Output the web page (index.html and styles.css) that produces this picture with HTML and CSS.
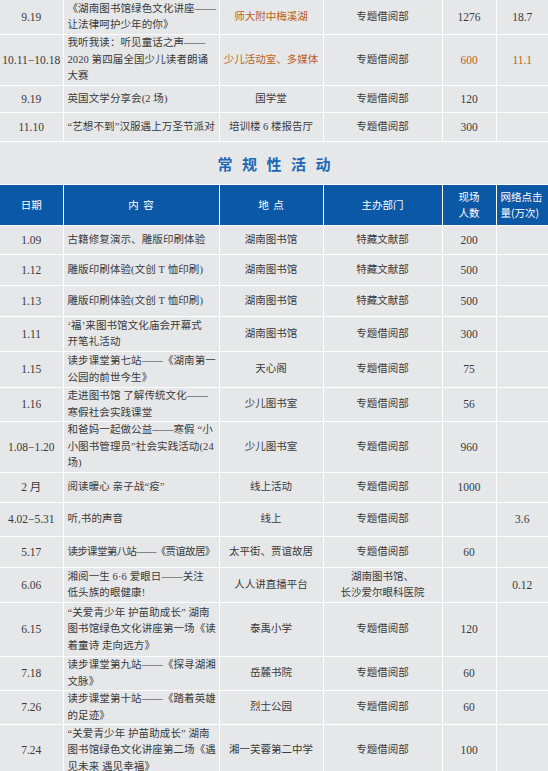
FILE: index.html
```html
<!DOCTYPE html>
<html lang="zh-CN">
<head>
<meta charset="utf-8">
<title>常规性活动</title>
<link rel="stylesheet" href="styles.css">
</head>
<body>
<table class="tbl">
  <colgroup>
    <col class="c-date"><col class="c-content"><col class="c-place"><col class="c-dept"><col class="c-people"><col class="c-net">
  </colgroup>
  <tbody>
    <tr class="h35">
      <td class="num">9.19</td>
      <td class="txt">《湖南图书馆绿色文化讲座——<br>让法律呵护少年的你》</td>
      <td class="mid orange">师大附中梅溪湖</td>
      <td class="mid">专题借阅部</td>
      <td class="num">1276</td>
      <td class="num">18.7</td>
    </tr>
    <tr class="h51">
      <td class="num">10.11−10.18</td>
      <td class="txt">我听我读：听见童话之声——<br>2020 第四届全国少儿读者朗诵<br>大赛</td>
      <td class="mid orange">少儿活动室、多媒体</td>
      <td class="mid">专题借阅部</td>
      <td class="num orange">600</td>
      <td class="num orange">11.1</td>
    </tr>
    <tr class="h27">
      <td class="num">9.19</td>
      <td class="txt">英国文学分享会(2 场)</td>
      <td class="mid">国学堂</td>
      <td class="mid">专题借阅部</td>
      <td class="num">120</td>
      <td class="num"></td>
    </tr>
    <tr class="h29">
      <td class="num">11.10</td>
      <td class="txt">“艺想不到”汉服遇上万圣节派对</td>
      <td class="mid">培训楼 6 楼报告厅</td>
      <td class="mid">专题借阅部</td>
      <td class="num">300</td>
      <td class="num"></td>
    </tr>
    <tr class="title-row">
      <td colspan="6" class="title">常规性活动</td>
    </tr>
    <tr class="head">
      <th>日期</th>
      <th>内&nbsp;&nbsp;容</th>
      <th>地&nbsp;&nbsp;点</th>
      <th>主办部门</th>
      <th>现场<br>人数</th>
      <th class="left">网络点击<br>量(万次)</th>
    </tr>
    <tr class="h29">
      <td class="num">1.09</td>
      <td class="txt">古籍修复演示、雕版印刷体验</td>
      <td class="mid">湖南图书馆</td>
      <td class="mid">特藏文献部</td>
      <td class="num">200</td>
      <td class="num"></td>
    </tr>
    <tr class="h31">
      <td class="num">1.12</td>
      <td class="txt">雕版印刷体验(文创 T 恤印刷)</td>
      <td class="mid">湖南图书馆</td>
      <td class="mid">特藏文献部</td>
      <td class="num">500</td>
      <td class="num"></td>
    </tr>
    <tr class="h31">
      <td class="num">1.13</td>
      <td class="txt">雕版印刷体验(文创 T 恤印刷)</td>
      <td class="mid">湖南图书馆</td>
      <td class="mid">特藏文献部</td>
      <td class="num">500</td>
      <td class="num"></td>
    </tr>
    <tr class="h35">
      <td class="num">1.11</td>
      <td class="txt">‘福’来图书馆文化庙会开幕式<br>开笔礼活动</td>
      <td class="mid">湖南图书馆</td>
      <td class="mid">专题借阅部</td>
      <td class="num">300</td>
      <td class="num"></td>
    </tr>
    <tr class="h36">
      <td class="num">1.15</td>
      <td class="txt">读步课堂第七站——《湖南第一<br>公园的前世今生》</td>
      <td class="mid">天心阁</td>
      <td class="mid">专题借阅部</td>
      <td class="num">75</td>
      <td class="num"></td>
    </tr>
    <tr class="h34">
      <td class="num">1.16</td>
      <td class="txt">走进图书馆 了解传统文化——<br>寒假社会实践课堂</td>
      <td class="mid">少儿图书室</td>
      <td class="mid">专题借阅部</td>
      <td class="num">56</td>
      <td class="num"></td>
    </tr>
    <tr class="h51">
      <td class="num">1.08−1.20</td>
      <td class="txt">和爸妈一起做公益——寒假 “小<br>小图书管理员”社会实践活动(24<br>场)</td>
      <td class="mid">少儿图书室</td>
      <td class="mid">专题借阅部</td>
      <td class="num">960</td>
      <td class="num"></td>
    </tr>
    <tr class="h30">
      <td class="num">2 月</td>
      <td class="txt">阅读暖心 亲子战“疫”</td>
      <td class="mid">线上活动</td>
      <td class="mid">专题借阅部</td>
      <td class="num">1000</td>
      <td class="num"></td>
    </tr>
    <tr class="h34">
      <td class="num">4.02−5.31</td>
      <td class="txt">听,书的声音</td>
      <td class="mid">线上</td>
      <td class="mid">专题借阅部</td>
      <td class="num"></td>
      <td class="num">3.6</td>
    </tr>
    <tr class="h31">
      <td class="num">5.17</td>
      <td class="txt tight">读步课堂第八站——《贾谊故居》</td>
      <td class="mid">太平街、贾谊故居</td>
      <td class="mid">专题借阅部</td>
      <td class="num">60</td>
      <td class="num"></td>
    </tr>
    <tr class="h35">
      <td class="num">6.06</td>
      <td class="txt">湘阅一生 6·6 爱眼日——关注<br>低头族的眼健康!</td>
      <td class="mid">人人讲直播平台</td>
      <td class="mid">湖南图书馆、<br>长沙爱尔眼科医院</td>
      <td class="num"></td>
      <td class="num">0.12</td>
    </tr>
    <tr class="h54">
      <td class="num">6.15</td>
      <td class="txt">“关爱青少年 护苗助成长” 湖南<br>图书馆绿色文化讲座第一场《读<br>着童诗 走向远方》</td>
      <td class="mid">泰禹小学</td>
      <td class="mid">专题借阅部</td>
      <td class="num">120</td>
      <td class="num"></td>
    </tr>
    <tr class="h33">
      <td class="num">7.18</td>
      <td class="txt">读步课堂第九站——《探寻湖湘<br>文脉》</td>
      <td class="mid">岳麓书院</td>
      <td class="mid">专题借阅部</td>
      <td class="num">60</td>
      <td class="num"></td>
    </tr>
    <tr class="h34">
      <td class="num">7.26</td>
      <td class="txt">读步课堂第十站——《踏着英雄<br>的足迹》</td>
      <td class="mid">烈士公园</td>
      <td class="mid">专题借阅部</td>
      <td class="num">60</td>
      <td class="num"></td>
    </tr>
    <tr class="h52">
      <td class="num">7.24</td>
      <td class="txt">“关爱青少年 护苗助成长” 湖南<br>图书馆绿色文化讲座第二场《遇<br>见未来 遇见幸福》</td>
      <td class="mid">湘一芙蓉第二中学</td>
      <td class="mid">专题借阅部</td>
      <td class="num">100</td>
      <td class="num"></td>
    </tr>
  </tbody>
</table>
</body>
</html>
```

FILE: styles.css
```css
html, body {
  margin: 0;
  padding: 0;
  background: #e6e7e9;
}

body {
  font-family: "Liberation Serif", "Noto Sans CJK SC", serif;
  color: #3a3a3a;
  overflow: hidden;
}

.tbl {
  width: 548px;
  border-collapse: collapse;
  table-layout: fixed;
  margin-top: -1px;
}

.c-date { width: 63px; }
.c-content { width: 156px; }
.c-place { width: 104px; }
.c-dept { width: 119px; }
.c-people { width: 54px; }
.c-net { width: 52px; }

.tbl td,
.tbl th {
  border: 1px solid #ffffff;
  padding: 0;
  vertical-align: middle;
  font-size: 10.5px;
  line-height: 16.5px;
  text-align: center;
  white-space: nowrap;
  overflow: hidden;
}

.tbl tr > :first-child { border-left: none; }
.tbl tr > :last-child { border-right: none; }

.tbl td.txt {
  text-align: left;
  padding-left: 4px;
  padding-right: 2px;
  letter-spacing: 0.1px;
}

.tbl td.txt.tight {
  letter-spacing: -0.7px;
}

.tbl td.num {
  font-size: 11.5px;
}

.orange { color: #b8621a; }

.h27 { height: 27px; }
.h29 { height: 29px; }
.h30 { height: 30px; }
.h31 { height: 31px; }
.h33 { height: 33px; }
.h34 { height: 34px; }
.h35 { height: 35px; }
.h36 { height: 36px; }
.h51 { height: 51px; }
.h52 { height: 52px; }
.h54 { height: 54px; }

.title-row { height: 39px; }

.tbl td.title {
  font-family: "Noto Sans CJK SC", sans-serif;
  font-size: 15px;
  font-weight: 700;
  color: #1d68b3;
  letter-spacing: 9.5px;
  text-indent: 9.5px;
  padding-top: 2px;
  vertical-align: top;
  line-height: 40px;
  height: 38px;
}

.head { height: 41px; }

.tbl .head th {
  background: #0a58a6;
  color: #ffffff;
  font-family: "Noto Sans CJK SC", sans-serif;
  font-weight: 400;
  font-size: 10.5px;
  line-height: 16.5px;
}

.tbl .head th.left {
  text-align: left;
  padding-left: 4px;
}
```
